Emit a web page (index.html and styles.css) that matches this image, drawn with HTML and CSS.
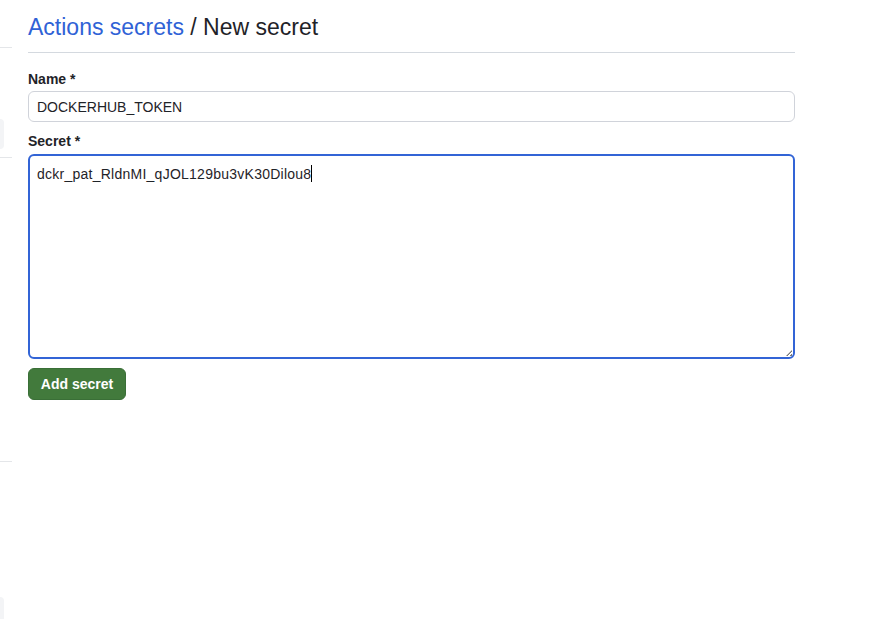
FILE: index.html
```html
<!DOCTYPE html>
<html>
<head>
<meta charset="utf-8">
<link rel="stylesheet" href="styles.css">
</head>
<body>
<div class="page">
  <aside class="side">
    <div class="side-line l1"></div>
    <div class="side-box b1"></div>
    <div class="side-line l2"></div>
    <div class="side-line l3"></div>
    <div class="side-box b2"></div>
  </aside>
  <main class="main">
    <h1 class="title"><a class="crumb" href="#">Actions secrets</a> / New secret</h1>
    <form class="form">
      <label class="label" for="name">Name *</label>
      <input class="input" id="name" type="text" value="DOCKERHUB_TOKEN">
      <label class="label secret-label" for="secret">Secret *</label>
      <div class="textarea"><span class="val">dckr_pat_RldnMI_qJOL129bu3vK30Dilou8</span><span class="caret"></span></div>
      <button class="btn" type="button">Add secret</button>
    </form>
  </main>
</div>
</body>
</html>
```
FILE: styles.css
```css
* { box-sizing: border-box; }
html, body { margin: 0; background: #fff; }
body {
  font-family: "Liberation Sans", Arial, sans-serif;
  color: #1f2328;
  width: 869px;
  height: 619px;
  overflow: hidden;
}
.page {
  display: flex;
  height: 619px;
}
.side {
  position: relative;
  width: 28px;
  flex: none;
}
.side-line {
  position: absolute;
  left: 0;
  width: 12px;
  height: 1px;
  background: #e4e6e9;
}
.l1 { top: 47px; }
.l2 { top: 157px; }
.l3 { top: 461px; }
.side-box {
  position: absolute;
  left: 0;
  width: 4px;
  background: #f3f4f6;
  border-radius: 0 4px 4px 0;
}
.b1 { top: 119px; height: 30px; }
.b2 { top: 597px; height: 30px; }
.main {
  width: 767px;
  padding-top: 13px;
}
.title {
  margin: 0;
  font-size: 23px;
  font-weight: 400;
  line-height: 29px;
  padding-bottom: 10px;
  border-bottom: 1px solid #d4d9df;
  color: #1f2328;
}
.crumb {
  color: #2f62d6;
  text-decoration: none;
}
.form {
  display: flex;
  flex-direction: column;
  align-items: flex-start;
  padding-top: 16px;
}
.label {
  font-size: 14px;
  font-weight: 700;
  line-height: 20px;
  margin-bottom: 2px;
}
.secret-label { margin-top: 9px; margin-bottom: 3px; }
.input {
  width: 767px;
  height: 31px;
  border: 1px solid #d0d3da;
  border-radius: 6px;
  padding: 0 8px;
  font: 14px "Liberation Sans", Arial, sans-serif;
  color: #1f2328;
  outline: none;
}
.textarea {
  width: 767px;
  height: 205px;
  border: 2px solid #3264d6;
  border-radius: 6px;
  padding: 8px 7px;
  font-size: 14px;
  line-height: 20px;
  display: flex;
  align-items: flex-start;
  position: relative;
}
.val { letter-spacing: 0.25px; }
.textarea::after {
  content: "";
  position: absolute;
  right: 1px;
  bottom: 1px;
  width: 6px;
  height: 6px;
  background: repeating-linear-gradient(135deg, transparent 0 1px, #777 1px 2px, transparent 2px 3px);
  clip-path: polygon(100% 0, 100% 100%, 0 100%);
}
.caret {
  display: inline-block;
  width: 1px;
  height: 17px;
  background: #000;
  margin-top: 1px;
}
.btn {
  margin-top: 9px;
  width: 98px;
  height: 32px;
  border: 1px solid #3a6f37;
  border-radius: 6px;
  background: #427a3c;
  color: #fff;
  font: 700 14px "Liberation Sans", Arial, sans-serif;
  padding: 0;
}
```
